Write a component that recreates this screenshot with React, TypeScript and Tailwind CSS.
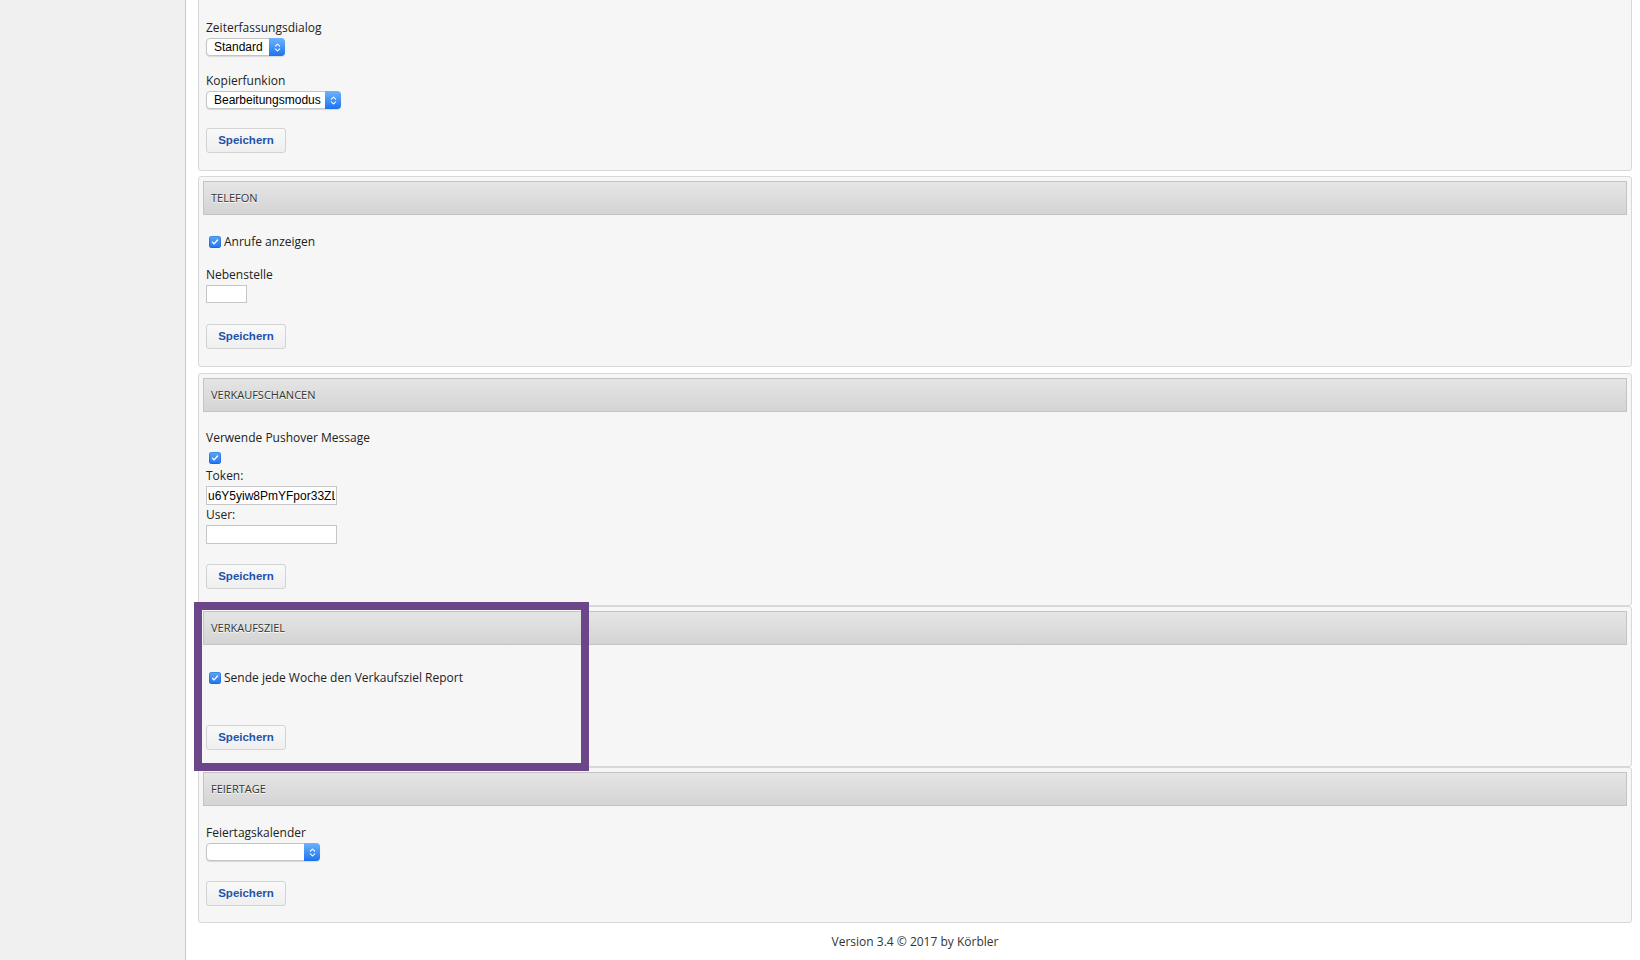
import React from "react";

const sans = "font-['Open_Sans',sans-serif]";
const ui = "font-['Liberation_Sans',Arial,sans-serif]";

// macOS-like blue checkbox
const Check: React.FC = () => (
  <span className="inline-flex h-[12px] w-[12px] shrink-0 items-center justify-center rounded-[3px] bg-gradient-to-b from-[#5aa6fa] to-[#1c74f1] shadow-[inset_0_0_0_0.5px_rgba(0,60,160,0.5)]">
    <svg viewBox="0 0 12 12" className="h-[10px] w-[10px]">
      <path d="M3 6.3 L5 8.3 L9 3.6" fill="none" stroke="white" strokeWidth="1.6" strokeLinecap="round" strokeLinejoin="round" />
    </svg>
  </span>
);

const Select: React.FC<{ value?: string; width: string }> = ({ value, width }) => (
  <div className={`flex h-[18px] ${width} rounded-[4px] border border-[#c4c4c4] bg-white shadow-[0_1px_1px_rgba(0,0,0,0.12)]`}>
    <div className={`flex-1 truncate pl-[7px] text-[12px] leading-[16px] text-black ${ui}`}>{value}</div>
    <div className="-my-px -mr-px flex w-[16px] items-center justify-center rounded-r-[4px] bg-gradient-to-b from-[#6db3fb] to-[#1b72ef]">
      <svg viewBox="0 0 8 12" className="h-[11px] w-[7px]">
        <path d="M1.5 4.5 L4 2 L6.5 4.5 M1.5 7.5 L4 10 L6.5 7.5" fill="none" stroke="white" strokeWidth="1.2" strokeLinecap="round" strokeLinejoin="round" />
      </svg>
    </div>
  </div>
);

const Button: React.FC = () => (
  <button className={`flex h-[25px] w-[80px] items-center justify-center rounded-[3px] border border-[#d3d3d3] bg-gradient-to-b from-[#f9f9f9] to-[#efefef] text-[11.5px] font-bold text-[#1f52ab] ${ui}`}>
    Speichern
  </button>
);

const Label: React.FC<{ children: React.ReactNode; className?: string }> = ({ children, className = "" }) => (
  <div className={`h-[18px] whitespace-nowrap pt-px text-[12px] leading-[18px] text-[#222] ${className}`}>{children}</div>
);

const CheckRow: React.FC<{ text: string; className?: string }> = ({ text, className = "" }) => (
  <div className={`flex h-[18px] items-center text-[12px] text-[#222] ${className}`}>
    <span className="ml-[3px] mr-[3px] flex">
      <Check />
    </span>
    {text}
  </div>
);

const Panel: React.FC<{ title?: string; className?: string; children: React.ReactNode }> = ({ title, className = "", children }) => (
  <section className={`rounded-[3px] border border-[#d8d8d8] bg-[#f6f6f6] px-1 pt-1 ${className}`}>
    {title && (
      <div className="flex h-[34px] items-center border border-[#c4c4c4] bg-gradient-to-b from-[#e5e5e5] to-[#d4d4d4] pl-[7px] text-[11px] text-[#333] [text-shadow:0_1px_0_#fff]">
        {title}
      </div>
    )}
    <div className="px-[3px]">{children}</div>
  </section>
);

export default function App() {
  return (
    <div className={`flex h-[960px] w-[1640px] overflow-hidden bg-white ${sans}`}>
      <aside className="h-full w-[186px] shrink-0 border-r border-[#c9c9c9] bg-[#f0f0f0]" />

      <main className="relative flex-1 pl-3 pr-2">
        <Panel className="-mt-[22px] pb-[17px]">
          <Label>Eigene Termine in der Zeiterfassung anzeigen, Typ</Label>
          <Label className="mt-[17px]">Zeiterfassungsdialog</Label>
          <div className="mt-[2px]">
            <Select value="Standard" width="w-[79px]" />
          </div>
          <Label className="mt-[15px]">Kopierfunkion</Label>
          <div className="mt-[2px]">
            <Select value="Bearbeitungsmodus" width="w-[135px]" />
          </div>
          <div className="mt-[19px]">
            <Button />
          </div>
        </Panel>

        <Panel title="TELEFON" className="mt-[5px] pb-[17px]">
          <CheckRow text="Anrufe anzeigen" className="mt-[18px]" />
          <Label className="mt-[14px]">Nebenstelle</Label>
          <input className="mt-[2px] block h-[18px] w-[41px] border border-[#c6c6c6] bg-white outline-none" />
          <div className="mt-[21px]">
            <Button />
          </div>
        </Panel>

        <Panel title="VERKAUFSCHANCEN" className="mt-[6px] pb-[16px]">
          <Label className="mt-[16px]">Verwende Pushover Message</Label>
          <div className="ml-[3px] mt-[6px] flex">
            <Check />
          </div>
          <Label className="mt-[2px]">Token:</Label>
          <input
            readOnly
            value="u6Y5yiw8PmYFpor33ZLabc"
            className={`mt-[2px] block h-[19px] w-[131px] border border-[#c6c6c6] bg-white px-px text-[12px] text-black outline-none ${ui}`}
          />
          <Label>User:</Label>
          <input className="mt-[2px] block h-[19px] w-[131px] border border-[#c6c6c6] bg-white outline-none" />
          <div className="mt-[20px]">
            <Button />
          </div>
        </Panel>

        <Panel title="VERKAUFSZIEL" className="pb-[16px]">
          <CheckRow text="Sende jede Woche den Verkaufsziel Report" className="mt-[24px]" />
          <div className="mt-[38px]">
            <Button />
          </div>
        </Panel>

        <Panel title="FEIERTAGE" className="pb-[16px]">
          <Label className="mt-[17px]">Feiertagskalender</Label>
          <div className="mt-[2px]">
            <Select width="w-[114px]" />
          </div>
          <div className="mt-[20px]">
            <Button />
          </div>
        </Panel>

        <footer className="mt-[10px] text-center text-[12px] leading-[18px] text-[#333]">
          Version 3.4 © 2017 by Körbler
        </footer>

        {/* highlight annotation */}
        <div className="pointer-events-none absolute left-[8px] top-[602px] h-[169px] w-[395px] border-[8px] border-[#6b4688]" />
      </main>
    </div>
  );
}
